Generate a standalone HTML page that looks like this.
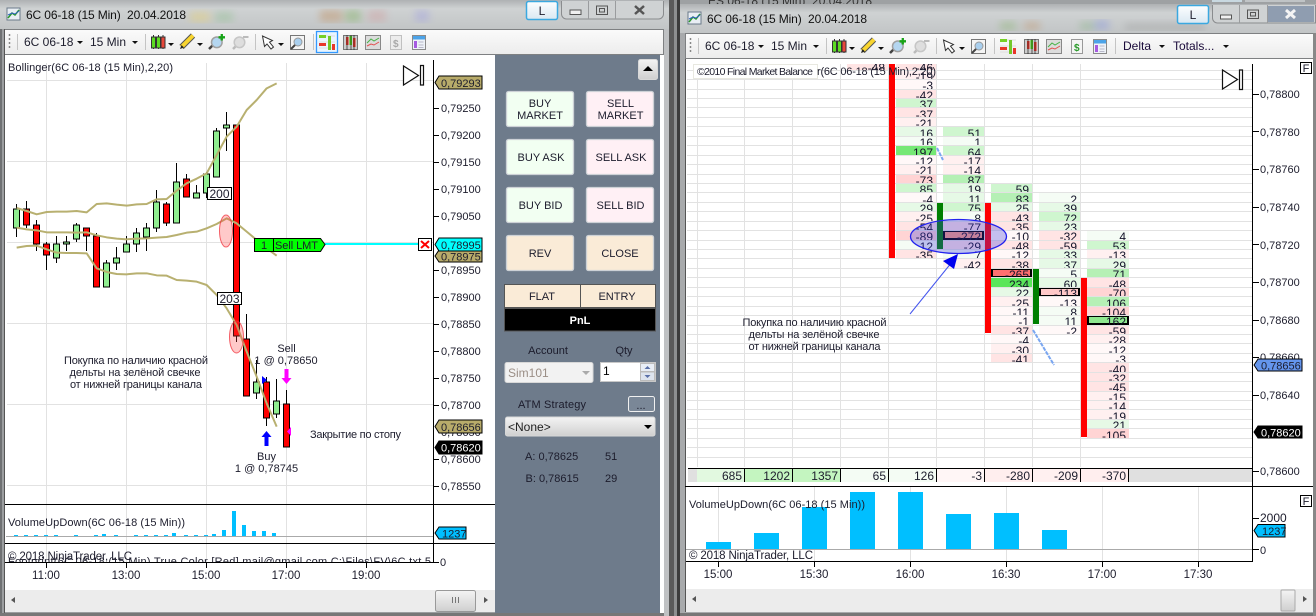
<!DOCTYPE html>
<html><head><meta charset="utf-8">
<style>
html,body{margin:0;padding:0;background:#888}
#w{position:relative;width:1316px;height:616px;overflow:hidden;background:#8f9193}
svg{position:absolute;left:0;top:0}
text{font-family:"Liberation Sans","Noto Sans CJK JP",sans-serif;font-size:11px;fill:#1c1c2c}
.t12{font-size:12px}
.m{text-anchor:middle}
#fp{position:absolute;left:0;top:64px;width:1316px;height:400px;overflow:hidden}
.c{position:absolute}
.c i{display:block;height:9.44px;overflow:hidden;font:normal 12px/14px "Liberation Sans",sans-serif;color:#14142a;text-align:right;padding-right:3px;box-sizing:border-box}
.g1{background:#f5fcf5}.g2{background:#e6f9e6}.g3{background:#cff6cf}.g4{background:#b5f0b5}.g5{background:#75e875}.g6{background:#5ae65a}
.p1{background:#fff8f8}.p2{background:#fff0f0}.p3{background:#ffe4e4}.p4{background:#ffd4d4}
.bx{box-shadow:inset 0 0 0 2px #000}
</style></head><body><div id="w">
<svg width="1316" height="616" viewBox="0 0 1316 616">
<defs>
<linearGradient id="tb" x1="0" y1="0" x2="0" y2="1"><stop offset="0" stop-color="#fbfbfb"/><stop offset="1" stop-color="#ececec"/></linearGradient>
<linearGradient id="ti" x1="0" y1="0" x2="0" y2="1"><stop offset="0" stop-color="#aeb1b3"/><stop offset=".3" stop-color="#cfd2d3"/><stop offset="1" stop-color="#c2c5c6"/></linearGradient>
<linearGradient id="bt" x1="0" y1="0" x2="0" y2="1"><stop offset="0" stop-color="#f4f4f4"/><stop offset="1" stop-color="#cfcfcf"/></linearGradient>
<linearGradient id="lb" x1="0" y1="0" x2="0" y2="1"><stop offset="0" stop-color="#fdfeff"/><stop offset="1" stop-color="#d9e8f2"/></linearGradient>
<filter id="bl"><feGaussianBlur stdDeviation="4"/></filter>
<clipPath id="ov"><rect x="5" y="545" width="428" height="17"/></clipPath>
<g id="icons">
<path d="M153.500 35v14M158.500 35v14M163 35v14" stroke="#333"/>
<path d="M151.500 37h4v11h-4zM156.500 37h4v11h-4z" fill="#5cdc22" stroke="#333"/>
<path d="M161 37h4v11h-4z" fill="#e8473a" stroke="#333"/>
<path d="M168 43h6l-3 3z" fill="#111"/>
<path d="M181.500 47l11.500-11.500" stroke="#555" stroke-width="6"/><path d="M181.500 47l11.500-11.500" stroke="#f9d52f" stroke-width="4"/><path d="M180 49l1.500-4 2.500 2.500z" fill="#222"/>
<path d="M197 43h6l-3 3z" fill="#111"/>
<path d="M209 49l4.500-4.500" stroke="#444" stroke-width="2.500"/><circle cx="216.800" cy="42.300" r="5.300" fill="#b4d6f0" stroke="#a0a0a0" stroke-width="1.500"/><path d="M221.800 34v6.500M218.500 37.300h6.500" stroke="#17a317" stroke-width="2.300"/>
<path d="M233 49l4.500-4.500" stroke="#bbb" stroke-width="2.500"/><circle cx="239.500" cy="42.300" r="5.300" fill="#dedede" stroke="#c6c6c6" stroke-width="1.500"/><path d="M243 37h5.500" stroke="#bbb" stroke-width="2"/>
<path d="M262.500 36l2 10.500 2.500-2.500 4 5 2.500-2-4-4.800 3-1.700z" fill="#fff" stroke="#333"/>
<path d="M278 43h6l-3 3z" fill="#111"/>
<rect x="290.500" y="35.500" width="14" height="14" fill="#f4f4f4" stroke="#777"/><circle cx="298" cy="42" r="4" fill="#a9cfee" stroke="#999"/><path d="M291 49l4-4" stroke="#444" stroke-width="2"/>
<path d="M319 36h16M319 42h16M319 48h16" stroke="#ddd"/><path d="M319 35h7v3h-7z" fill="#76d026"/><path d="M319 43h7v3h-7z" fill="#e8362a"/><path d="M328 36h3v14h-3z" fill="#74c82a"/><path d="M332 44h3v6h-3z" fill="#e8362a"/>
<rect x="343.500" y="35.500" width="14" height="14" fill="#ccc" stroke="#777"/><path d="M346 37h2.500v8H346zM353 38h2.500v9H353z" fill="#e8362a"/><path d="M349.500 36H352v9h-2.500z" fill="#4ed41e"/><path d="M347 35v15M351 35v15M354 35v15" stroke="#222" stroke-width=".7"/>
<rect x="365.500" y="35.500" width="15" height="14" fill="#dcdcdc" stroke="#888"/><path d="M367 43l4-4 3 2 5-3" stroke="#47b247" fill="none"/><path d="M367 46l4-2 3 1 5-3" stroke="#e25050" fill="none"/>
<rect x="412.500" y="35.500" width="13" height="14" fill="#eef2f8" stroke="#8a8a8a"/><rect x="413" y="36" width="12" height="3.500" fill="#4ca3e8"/><rect x="414" y="41" width="3" height="7" fill="#a65ae0"/><path d="M418.500 42h5M418.500 45h5M418.500 47.500h5" stroke="#b8b8c8"/>
</g>
</defs>

<!-- window 1 frame -->
<rect x="0" y="0" width="670" height="616" fill="#9c9ea0"/>
<rect x="0" y="0" width="2" height="616" fill="#6f7173"/>
<rect x="0" y="0" width="670" height="29" fill="url(#ti)"/>
<g filter="url(#bl)" opacity=".45"><rect x="190" y="12" width="20" height="10" fill="#e8d070"/><rect x="215" y="12" width="18" height="10" fill="#90c090"/><rect x="320" y="10" width="22" height="12" fill="#c09060"/><rect x="345" y="10" width="16" height="12" fill="#80b060"/><rect x="368" y="10" width="18" height="12" fill="#d0a0a0"/><rect x="415" y="10" width="14" height="12" fill="#a0a0e0"/></g>
<rect x="7" y="8" width="13" height="12" fill="#e9eef4" stroke="#6a7a8a"/><path d="M8 18l4-5 3 2 4-5" stroke="#2a9a2a" stroke-width="1.500" fill="none"/><path d="M8 15l4-2 3 1 4-3" stroke="#3060c0" fill="none"/>
<text x="26" y="19" class="t12" textLength="160" style="fill:#111">6C 06-18 (15 Min)&#160;&#160;20.04.2018</text>
<rect x="526.500" y="1.500" width="31" height="18" rx="2" fill="url(#lb)" stroke="#3aa8e0" stroke-width="1.500"/><text x="542" y="15" class="t12 m">L</text>
<path d="M561.500 1v13a5 5 0 0 0 5 5h92a5 5 0 0 0 5-5V1" fill="#cfd2d3" stroke="#8a8c8e"/>
<path d="M588.500 1v18M615.500 1v18" stroke="#9a9c9e"/>
<rect x="570" y="10" width="11" height="4.500" fill="#f0f0f0" stroke="#555"/><rect x="596.500" y="6" width="11" height="8.500" fill="none" stroke="#555"/><rect x="599.500" y="8.500" width="5" height="3.500" fill="none" stroke="#555"/>
<path d="M635 6l9 8M644 6l-9 8" stroke="#555" stroke-width="2.500"/>
<!-- left white area -->
<rect x="5" y="55" width="490" height="557" fill="#fff"/>
<rect x="660" y="55" width="4" height="558" fill="#fff"/>
<rect x="4.500" y="29.500" width="659" height="25" fill="url(#tb)" stroke="#7e8082"/>
<rect x="4" y="29" width="1" height="584" fill="#555"/>
<rect x="0" y="613" width="670" height="3" fill="#777"/>
<!-- toolbar L -->
<path d="M9.500 34v2M9.500 38v2M9.500 42v2M9.500 46v2" stroke="#888" stroke-width="1.500"/>
<path d="M17.500 34v16M145.500 34v16M255.500 34v16M313.500 34v16" stroke="#c4c4c4"/>
<text x="24" y="46" class="t12">6C 06-18</text><path d="M77 41h6l-3 3z" fill="#111"/>
<text x="90" y="46" class="t12">15 Min</text><path d="M132 41h6l-3 3z" fill="#111"/>
<rect x="316.500" y="31.500" width="21" height="21" fill="#e9f5ff" stroke="#3399ff" stroke-width="1.300"/>
<use href="#icons"/>
<rect x="390.500" y="35.500" width="11" height="14" fill="#ececec" stroke="#c0c0c0"/><text x="393" y="47" style="font-size:10px;font-weight:bold;fill:#a8a8a8">$</text>

<!-- left chart -->
<g stroke="#e2e2e2" fill="none">
<path d="M46.500 63V562M126.500 63V562M206.500 63V562M286.500 63V562M366.500 63V562"/>
<path d="M7 80.500H433M7 161.500H433M7 242.500H433M7 323.500H433M7 404.500H433M7 485.500H433"/>
</g>
<text x="8" y="71" textLength="165">Bollinger(6C 06-18 (15 Min),2,20)</text>
<path d="M403.500 66v19l15-9.500zM420.500 65.500h3v19.500h-3z" fill="#fff" stroke="#111" stroke-width="1.200"/>
<path d="M16.500 204V237M26.500 201V228M36.500 220V251M46.500 242V270M56.500 236V263M66.500 236V251M76.500 223V242M86.500 228V251M96.500 233V287M106.500 260V287M116.500 247V270M126.500 236V252M136.500 228V252M146.500 223V251M156.500 190V232M166.500 202V226M176.500 163V223M186.500 174V197M196.500 185V198M206.500 172V198M216.500 128V177M226.500 112V151M236.500 125V342M246.500 314V396M256.500 360V399M266.500 377V426M276.500 379V418M286.500 390V447" stroke="#000"/>
<path d="M13.500 209h6v19h-6zM53.500 244h6v14h-6zM63.500 242h6v2h-6zM73.500 225h6v14h-6zM103.500 263h6v24h-6zM113.500 258h6v5h-6zM123.500 244h6v8h-6zM133.500 233h6v11h-6zM143.500 228h6v9h-6zM153.500 202h6v26h-6zM173.500 182h6v41h-6zM193.500 193h6v5h-6zM203.500 174h6v19h-6zM213.500 131h6v46h-6zM223.500 125h6v3h-6zM253.500 382h6v11h-6zM273.500 401h6v13h-6z" fill="#90ee90" stroke="#000"/>
<path d="M23.500 209h6v16h-6zM33.500 225h6v19h-6zM43.500 244h6v11h-6zM83.500 228h6v8h-6zM93.500 236h6v51h-6zM163.500 204h6v19h-6zM183.500 179h6v18h-6zM233.500 125h6v211h-6zM243.500 339h6v57h-6zM263.500 382h6v36h-6zM283.500 404h6v43h-6z" fill="#f00" stroke="#000"/>
<g transform="scale(.33333)" fill="none" stroke="#b8b070" stroke-width="6" stroke-linejoin="round">
<polyline points="50,624 80,633 110,643 140,636 170,635 200,635 230,633 260,637 290,612 320,610 350,614 380,617 410,613 440,612 470,598 500,597 530,572 560,550 590,536 620,520 650,465 680,410 710,380 740,330 770,300 800,265 830,250"/>
<polyline points="50,683 80,688 110,691 140,697 170,697 200,697 230,698 260,697 290,706 320,712 350,716 380,718 410,716 440,715 470,713 500,711 530,705 560,698 590,695 620,685 650,672 680,655 710,670 740,695 770,720 800,745 830,767"/>
<polyline points="50,743 80,738 110,737 140,748 170,758 200,759 230,759 260,760 290,805 320,816 350,822 380,823 410,820 440,820 470,826 500,827 530,840 560,842 590,845 620,855 650,885 680,925 710,975 740,1055 770,1130 800,1210 830,1280"/>
</g>
<ellipse cx="226" cy="231" rx="6.500" ry="16" fill="rgba(255,60,60,.28)" stroke="rgba(240,50,60,.75)"/>
<ellipse cx="236.500" cy="337" rx="7" ry="16" fill="rgba(255,60,60,.28)" stroke="rgba(240,50,60,.75)"/>
<rect x="207.500" y="187.500" width="24" height="12" fill="#fff" stroke="#000"/><text x="219.500" y="198" class="t12 m">200</text>
<rect x="217.500" y="292.500" width="24" height="12" fill="#fff" stroke="#000"/><text x="229.500" y="303" class="t12 m">203</text>
<text x="286.500" y="352" class="m">Sell</text><text x="286" y="364" class="m">1 @ 0,78650</text>
<text x="266.500" y="460" class="m">Buy</text><text x="266.500" y="472" class="m">1 @ 0,78745</text>
<path d="M284.500 369h4v9h3l-5 6-5-6h3z" fill="#f0f"/>
<path d="M264.500 446h4v-9h3l-5-6-5 6h3z" fill="#00f"/>
<path d="M262 376l5 4-5 4z" fill="#00f"/><path d="M291 427v9l-4-4.500z" fill="#f0f"/>
<text x="136" y="364" class="m" textLength="144">Покупка по наличию красной</text>
<text x="135" y="376" class="m" textLength="131">дельты на зелёной свечке</text>
<text x="136" y="388" class="m" textLength="132">от нижней границы канала</text>
<text x="310" y="438" textLength="91">Закрытие по стопу</text>
<!-- Sell LMT -->
<path d="M325 244H418" stroke="#00ffff" stroke-width="2"/>
<path d="M254.500 238.500h66l4.500 6-4.500 7h-66z" fill="#00ff00" stroke="#000"/><path d="M273.500 239v12" stroke="#000"/>
<text x="261" y="249">1</text><text x="275" y="249" textLength="43">Sell LMT</text>
<rect x="418.500" y="238.500" width="13" height="12" fill="#fff" stroke="#000"/><path d="M421 241l8 7M429 241l-8 7" stroke="#f00" stroke-width="2"/>
<!-- panels left -->
<path d="M5 504.500H495M5 543.500H495" stroke="#000"/>
<path d="M233.500 0" />
<path d="M232 511h4v25h-4zM242 525h4v11h-4zM252 531h4v5h-4zM262 531h4v5h-4zM272 533h4v3h-4zM222 530h4v6h-4zM212 534h4v2h-4zM172 533h4v3h-4zM102 534h4v2h-4zM14 535h4v1h-4zM24 535h4v1h-4zM34 535h4v1h-4zM44 535h4v1h-4zM54 535h4v1h-4zM74 535h4v1h-4zM94 535h4v1h-4zM114 535h4v1h-4zM134 535h4v1h-4zM144 535h4v1h-4zM154 535h4v1h-4zM164 535h4v1h-4zM184 535h4v1h-4zM194 535h4v1h-4zM204 535h4v1h-4z" fill="#00bfff"/>
<path d="M6 536.500H433" stroke="#aaa"/>
<path d="M5 562.500H433M433.500 60V562" stroke="#000"/>
<text x="8" y="526" textLength="177">VolumeUpDown(6C 06-18 (15 Min))</text>
<text x="8" y="560" style="font-size:11.500px" textLength="124">© 2018 NinjaTrader, LLC</text>
<g clip-path="url(#ov)"><text x="8" y="565" textLength="423">Footprint(6C 06-18 (15 Min) True Color [Red] mail@gmail.com C:\Files\FV\6C.txt 5</text></g>
<path d="M5 562.500H433" stroke="#000"/>
<path d="M46.500 563v5M126.500 563v5M206.500 563v5M286.500 563v5M366.500 563v5" stroke="#000"/>
<text x="46" y="579" class="m" style="font-size:11.500px">11:00</text><text x="126" y="579" class="m" style="font-size:11.500px">13:00</text><text x="206" y="579" class="m" style="font-size:11.500px">15:00</text><text x="286" y="579" class="m" style="font-size:11.500px">17:00</text><text x="366" y="579" class="m" style="font-size:11.500px">19:00</text>
<path d="M433 108.500h6M433 135.500h6M433 162.500h6M433 189.500h6M433 216.500h6M433 270.500h6M433 297.500h6M433 324.500h6M433 351.500h6M433 378.500h6M433 405.500h6M433 459.500h6M433 486.500h6M433 562.500h6" stroke="#000"/>
<g><text x="441" y="112">0,79250</text><text x="441" y="139">0,79200</text><text x="441" y="166">0,79150</text><text x="441" y="193">0,79100</text><text x="441" y="220">0,79050</text><text x="441" y="274">0,78950</text><text x="441" y="301">0,78900</text><text x="441" y="328">0,78850</text><text x="441" y="355">0,78800</text><text x="441" y="382">0,78750</text><text x="441" y="409">0,78700</text><text x="441" y="436">0,78650</text><text x="441" y="463">0,78600</text><text x="441" y="490">0,78550</text><text x="440" y="566">0</text></g>
<path d="M435 82.500l4-6.500h43v13h-43z" fill="#b8ab6a" stroke="#000"/><text x="441" y="87">0,79293</text>
<path d="M435 256l4-6h43v12h-43z" fill="#b8ab6a" stroke="#000"/><text x="441" y="260.500">0,78975</text>
<path d="M435 244.500l4-6.500h43v13h-43z" fill="#00ffff" stroke="#000"/><text x="441" y="249">0,78995</text>
<path d="M435 426.500l4-6.500h43v13h-43z" fill="#b8ab6a" stroke="#000"/><text x="441" y="431">0,78656</text>
<path d="M435 447.500l4-6.500h43v13h-43z" fill="#000" stroke="#000"/><text x="441" y="451.500" style="fill:#fff">0,78620</text>
<path d="M435 533l4-6h27v12h-27z" fill="#00bfff" stroke="#000"/><text x="442" y="537.500">1237</text>
<!-- scroll L -->
<rect x="5" y="590" width="490" height="22" fill="#ececec"/>
<path d="M15 597v6l-4-3z" fill="#555"/>
<rect x="435.500" y="590.500" width="40" height="21" rx="2" fill="url(#bt)" stroke="#999"/><path d="M452.500 597v6M455.500 597v6M458.500 597v6" stroke="#777"/>
<path d="M484 597v6l4-3z" fill="#555"/>
<!-- panel -->
<rect x="495" y="55" width="165" height="558" fill="#6e7b8b"/>
<rect x="638.500" y="59.500" width="19" height="20" rx="2" fill="url(#bt)" stroke="#d8d8d8"/><path d="M643 71h10l-5-5z" fill="#000"/>
<g stroke="#cdd1d6" stroke-width="1.300">
<rect x="506.500" y="91.500" width="67" height="35" rx="2" fill="#f2fff2"/><rect x="586.500" y="91.500" width="67" height="35" rx="2" fill="#fff0f5"/>
<rect x="506.500" y="139.500" width="67" height="35" rx="2" fill="#f2fff2"/><rect x="586.500" y="139.500" width="67" height="35" rx="2" fill="#fff0f5"/>
<rect x="506.500" y="187.500" width="67" height="35" rx="2" fill="#f2fff2"/><rect x="586.500" y="187.500" width="67" height="35" rx="2" fill="#fff0f5"/>
<rect x="506.500" y="235.500" width="67" height="35" rx="2" fill="#faebd7"/><rect x="586.500" y="235.500" width="67" height="35" rx="2" fill="#faebd7"/>
</g>
<text x="540" y="107" class="m">BUY</text><text x="540" y="119" class="m">MARKET</text><text x="620.500" y="107" class="m">SELL</text><text x="620.500" y="119" class="m">MARKET</text>
<text x="541" y="161" class="m">BUY ASK</text><text x="621" y="161" class="m">SELL ASK</text><text x="540.500" y="209" class="m">BUY BID</text><text x="620.500" y="209" class="m">SELL BID</text><text x="540" y="257" class="m">REV</text><text x="620" y="257" class="m">CLOSE</text>
<rect x="504.500" y="284.500" width="151" height="23" fill="#faebd7" stroke="#555"/><path d="M580.500 285v22" stroke="#555"/>
<text x="542" y="300" class="m">FLAT</text><text x="617" y="300" class="m">ENTRY</text>
<rect x="504.500" y="308.500" width="151" height="22.500" fill="#000" stroke="#555"/><text x="580" y="324" class="m" style="fill:#fff;font-weight:bold">PnL</text>
<text x="548" y="354" class="m">Account</text><text x="624" y="354" class="m">Qty</text>
<rect x="505" y="362.500" width="88" height="20" rx="2" fill="#f2f2f2" stroke="#d8d8d8"/><text x="508" y="377" style="font-size:12px;fill:#9a8e86">Sim101</text><path d="M582 371h8l-4 4z" fill="#aaa"/>
<rect x="600.500" y="362.500" width="55" height="19" fill="#fff" stroke="#c8c8c8"/><text x="603" y="375" class="t12" style="fill:#000">1</text>
<rect x="640.500" y="363.500" width="14" height="8" fill="#e8eef6" stroke="#bbb"/><rect x="640.500" y="372" width="14" height="8.500" fill="#dde4ee" stroke="#bbb"/><path d="M644.500 369h6l-3-3zM644.500 375h6l-3 3z" fill="#5a70a8"/>
<text x="518" y="408" textLength="68">ATM Strategy</text>
<rect x="628.500" y="396.500" width="26" height="15" rx="2" fill="#7a8797" stroke="#f0f0f0"/><text x="641" y="409" class="m">...</text>
<rect x="505.500" y="417" width="149.500" height="19" rx="2" fill="url(#bt)" stroke="#d8d8d8"/><text x="508" y="431" class="t12" style="fill:#222">&lt;None&gt;</text><path d="M644 425h8l-4 4z" fill="#000"/>
<text x="525" y="460">A: 0,78625</text><text x="605" y="460">51</text><text x="525.500" y="482">B: 0,78615</text><text x="605" y="482">29</text>

<!-- gap -->
<rect x="664" y="29" width="5" height="587" fill="#bfc1c3"/>
<rect x="669" y="0" width="5" height="616" fill="#5a5a5a"/>
<rect x="674" y="0" width="3" height="616" fill="#8d8f90"/>
<rect x="677" y="0" width="3" height="616" fill="#3c3c3c"/>

<!-- window 2 -->
<rect x="680" y="0" width="636" height="616" fill="#a8aaac"/>
<rect x="680" y="0" width="636" height="4" fill="#9ea1a3"/>
<text x="708" y="5" class="t12" style="fill:#333">ES 06-18 (15 Min)&#160;&#160;20.04.2018</text>
<rect x="1212" y="0" width="30" height="2" fill="#c8d8e0"/><rect x="1245" y="0" width="60" height="2" fill="#c0c4c6"/>
<rect x="680" y="4" width="636" height="29" fill="url(#ti)"/>
<g filter="url(#bl)" opacity=".4"><rect x="1000" y="22" width="16" height="8" fill="#80b060"/><rect x="1024" y="22" width="16" height="8" fill="#c09060"/><rect x="1080" y="22" width="16" height="8" fill="#80b080"/><rect x="1095" y="20" width="14" height="10" fill="#8090e0"/><rect x="1125" y="24" width="80" height="6" fill="#909090"/></g>
<rect x="688" y="12" width="13" height="12" fill="#e9eef4" stroke="#6a7a8a"/><path d="M689 22l4-5 3 2 4-5" stroke="#2a9a2a" stroke-width="1.500" fill="none"/><path d="M689 19l4-2 3 1 4-3" stroke="#3060c0" fill="none"/>
<text x="707" y="23" class="t12" textLength="160" style="fill:#111">6C 06-18 (15 Min)&#160;&#160;20.04.2018</text>
<rect x="1177.500" y="5.500" width="31" height="18" rx="2" fill="url(#lb)" stroke="#3aa8e0" stroke-width="1.500"/><text x="1193" y="19" class="t12 m">L</text>
<path d="M1212.500 5v13a5 5 0 0 0 5 5h98V5" fill="#cfd2d3" stroke="#8a8c8e"/>
<rect x="1268" y="6" width="46" height="16" fill="#8f9db0"/>
<path d="M1239.500 5v18M1267.500 5v18" stroke="#9a9c9e"/>
<rect x="1220.500" y="15" width="11" height="4" fill="#f0f0f0" stroke="#555"/><rect x="1247.500" y="10" width="11" height="8.500" fill="none" stroke="#555"/><rect x="1250.500" y="12.500" width="5" height="3.500" fill="none" stroke="#555"/>
<path d="M1286 10l9 8M1295 10l-9 8" stroke="#f4f4f4" stroke-width="3"/>
<rect x="685" y="58" width="628" height="554" fill="#fff"/>
<rect x="685.500" y="33.500" width="628" height="25" fill="url(#tb)" stroke="#7e8082"/>
<rect x="685" y="59" width="1" height="553" fill="#555"/>
<rect x="680" y="613" width="636" height="3" fill="#777"/>
<rect x="1313" y="33" width="3" height="583" fill="#888"/>
<path d="M690.500 38v2M690.500 42v2M690.500 46v2M690.500 50v2" stroke="#888" stroke-width="1.500"/>
<path d="M698.500 38v16M826.500 38v16M936.500 38v16M994.500 38v16M1115.500 38v16" stroke="#c4c4c4"/>
<text x="705" y="50" class="t12">6C 06-18</text><path d="M758 45h6l-3 3z" fill="#111"/>
<text x="771" y="50" class="t12">15 Min</text><path d="M813 45h6l-3 3z" fill="#111"/>
<use href="#icons" x="681" y="4"/>
<rect x="1071.500" y="39.500" width="11" height="14" fill="#f4f4f4" stroke="#999"/><text x="1074" y="51" style="font-size:10px;font-weight:bold;fill:#2a9a2a">$</text>
<text x="1123" y="50" class="t12" style="fill:#1a0a3a">Delta</text><path d="M1159 45h6l-3 3z" fill="#111"/>
<text x="1173" y="50" class="t12" style="fill:#1a0a3a">Totals...</text><path d="M1223 45h6l-3 3z" fill="#111"/>
</svg>

<div id="fp">
<div class="c" style="left:847px;top:-3.44px;width:41px"><i class="p3">-48</i></div>
<div class="c" style="left:896px;top:-3.44px;width:40px"><i class="p3">-46</i><i class="p2">-19</i><i class="p1">-3</i><i class="p3">-42</i><i class="g3">37</i><i class="p3">-37</i><i class="p2">-21</i><i class="g2">16</i><i class="g1">16</i><i class="g5">197</i><i class="p1">-12</i><i class="p2">-21</i><i class="p4">-73</i><i class="g3">85</i><i class="p1">-4</i><i class="g2">29</i><i class="p2">-25</i><i class="p3">-54</i><i class="p4">-89</i><i class="g1">12</i><i class="p3">-35</i></div>
<div class="c" style="left:943px;top:62.64px;width:41px"><i class="g3">51</i><i class="g1">1</i><i class="g3">64</i><i class="p2">-17</i><i class="p2">-14</i><i class="g4">87</i><i class="g2">19</i><i class="g2">11</i><i class="g3">75</i><i class="g1">8</i><i class="p3">-77</i><i class="bx" style="background:#ffa080">-272</i><i class="p3">-29</i><i class="g1">7</i><i class="p2">-42</i></div>
<div class="c" style="left:991px;top:119.28px;width:41px"><i class="g3">59</i><i class="g4">83</i><i class="g2">25</i><i class="p3">-43</i><i class="p3">-35</i><i class="p1">-10</i><i class="p3">-48</i><i class="p1">-12</i><i class="p3">-38</i><i class="bx" style="background:#ff7070">-265</i><i class="g6">234</i><i class="g2">22</i><i class="p2">-25</i><i class="p1">-11</i><i class="p1">-1</i><i class="p3">-37</i><i class="p1">-4</i><i class="p2">-30</i><i class="p3">-41</i></div>
<div class="c" style="left:1039px;top:128.72px;width:41px"><i class="g1">2</i><i class="g2">39</i><i class="g3">72</i><i class="g2">23</i><i class="p3">-32</i><i class="p3">-59</i><i class="g2">33</i><i class="g2">37</i><i class="g1">5</i><i class="g2">60</i><i class="bx" style="background:#ffc8c8">-113</i><i class="p1">-13</i><i class="g1">8</i><i class="g1">11</i><i class="p1">-2</i></div>
<div class="c" style="left:1087px;top:166.48px;width:42px"><i class="g1">4</i><i class="g3">53</i><i class="p2">-13</i><i class="g2">29</i><i class="g4">71</i><i class="p3">-48</i><i class="p4">-70</i><i class="g4">106</i><i class="p4">-104</i><i class="bx" style="background:#8fe88f">162</i><i class="p3">-59</i><i class="p2">-28</i><i class="p1">-12</i><i class="p1">-3</i><i class="p3">-40</i><i class="p3">-32</i><i class="p3">-45</i><i class="p2">-15</i><i class="p2">-14</i><i class="p2">-19</i><i class="g2">21</i><i class="p4">-105</i></div>
</div>

<svg width="1316" height="616" viewBox="0 0 1316 616">
<!-- right grid -->
<g stroke="#e2e2e2" fill="none">
<path d="M697.500 64V467M744.500 64V467M792.500 64V467M840.500 64V467M888.500 64V467M936.500 64V467M984.500 64V467M1032.500 64V467M1080.500 64V467"/>
<path d="M687 70.500H1252M687 79.500H1252M687 89.500H1252M687 98.500H1252M687 107.500H1252M687 117.500H1252M687 126.500H1252M687 136.500H1252M687 145.500H1252M687 155.500H1252M687 164.500H1252M687 174.500H1252M687 183.500H1252M687 192.500H1252M687 202.500H1252M687 211.500H1252M687 221.500H1252M687 230.500H1252M687 240.500H1252M687 249.500H1252M687 258.500H1252M687 268.500H1252M687 277.500H1252M687 287.500H1252M687 296.500H1252M687 306.500H1252M687 315.500H1252M687 325.500H1252M687 334.500H1252M687 343.500H1252M687 353.500H1252M687 362.500H1252M687 372.500H1252M687 381.500H1252M687 391.500H1252M687 400.500H1252M687 409.500H1252M687 419.500H1252M687 428.500H1252M687 438.500H1252M687 447.500H1252M687 457.500H1252"/>
</g>
<rect x="889" y="64" width="6" height="194" fill="#f00"/>
<rect x="937" y="203" width="6" height="46" fill="#008000"/>
<rect x="985" y="203" width="6" height="130" fill="#f00"/>
<rect x="1033" y="269" width="6" height="55" fill="#008000"/>
<rect x="1081" y="278" width="6" height="159" fill="#f00"/>
<rect x="693.500" y="64.500" width="124" height="14" fill="#fff" stroke="#e8e8e0"/>
<text x="697" y="75" style="font-size:10.500px" textLength="116">©2010 Final Market Balance</text>
<text x="817" y="75" textLength="119">r(6C 06-18 (15 Min),2,20)</text>
<path d="M1222.500 70v19l15-9.500zM1239.500 70h3v19.500h-3z" fill="#fff" stroke="#111" stroke-width="1.200"/>
<rect x="1300.500" y="62.500" width="11" height="11" fill="#fff" stroke="#000"/><text x="1306" y="72" class="m">F</text>
<ellipse cx="958.500" cy="236.500" rx="48" ry="17" fill="rgba(60,60,220,.3)" stroke="#2222ee" stroke-width="1.300"/>
<path d="M910 314L952 262" stroke="#4455ee"/>
<path d="M943 261L958 254 954 269z" fill="#0000ee"/>
<path d="M1033 330L1054 365M937 148L943 160" stroke="#7aa6f0" stroke-width="2" stroke-dasharray="4 1"/>
<text x="814.500" y="326" class="m" textLength="144">Покупка по наличию красной</text>
<text x="814" y="338" class="m" textLength="131">дельты на зелёной свечке</text>
<text x="814.500" y="350" class="m" textLength="132">от нижней границы канала</text>
<!-- totals -->
<rect x="688" y="469" width="9" height="13" fill="#e0e0e0"/>
<rect x="697" y="469" width="47" height="13" fill="#e2f9e0"/><rect x="745" y="469" width="47" height="13" fill="#c4f5c0"/><rect x="793" y="469" width="47" height="13" fill="#c4f5c0"/><rect x="841" y="469" width="47" height="13" fill="#f4fcf4"/><rect x="889" y="469" width="47" height="13" fill="#f4fcf4"/><rect x="937" y="469" width="47" height="13" fill="#fff6f6"/><rect x="985" y="469" width="47" height="13" fill="#ffeeee"/><rect x="1033" y="469" width="47" height="13" fill="#fff0f0"/><rect x="1081" y="469" width="47" height="13" fill="#ffeeee"/>
<rect x="1129" y="469" width="123" height="13" fill="#e0e0e0"/>
<path d="M688 468.500H1252M744.500 468v14M792.500 468v14M840.500 468v14M888.500 468v14M936.500 468v14M984.500 468v14M1032.500 468v14M1080.500 468v14M1128.500 468v14" stroke="#000"/>
<g class="t12" text-anchor="end">
<text x="742" y="480" class="t12">685</text><text x="790" y="480" class="t12">1202</text><text x="838" y="480" class="t12">1357</text><text x="886" y="480" class="t12">65</text><text x="934" y="480" class="t12">126</text><text x="982" y="480" class="t12">-3</text><text x="1030" y="480" class="t12">-280</text><text x="1078" y="480" class="t12">-209</text><text x="1126" y="480" class="t12">-370</text>
</g>
<path d="M685 486.500H1313M686 561.500H1253M1252.500 64V562" stroke="#000"/>
<!-- lower -->
<path d="M718.500 487V561M814.500 487V561M910.500 487V561M1006.500 487V561M1102.500 487V561M1198.500 487V561" stroke="#e2e2e2"/>
<path d="M706 542h25v7h-25zM754 533h25v16h-25zM802 507h25v42h-25zM850 492h25v57h-25zM898 492h25v57h-25zM946 514h25v35h-25zM994 513h25v36h-25zM1042 530h25v19h-25z" fill="#00bfff"/>
<path d="M686 549.500H1252" stroke="#aaa"/>
<text x="689" y="508" textLength="176">VolumeUpDown(6C 06-18 (15 Min))</text>
<text x="689" y="559" style="font-size:11.500px" textLength="124">© 2018 NinjaTrader, LLC</text>
<path d="M718.500 562v5M814.500 562v5M910.500 562v5M1006.500 562v5M1102.500 562v5M1198.500 562v5" stroke="#000"/>
<text x="718" y="578" class="m" style="font-size:11.500px">15:00</text><text x="814" y="578" class="m" style="font-size:11.500px">15:30</text><text x="910" y="578" class="m" style="font-size:11.500px">16:00</text><text x="1006" y="578" class="m" style="font-size:11.500px">16:30</text><text x="1102" y="578" class="m" style="font-size:11.500px">17:00</text><text x="1198" y="578" class="m" style="font-size:11.500px">17:30</text>
<rect x="1300.500" y="495.500" width="11" height="11" fill="#fff" stroke="#000"/><text x="1306" y="505" class="m">F</text>
<path d="M1253 94.500h6M1253 131.500h6M1253 169.500h6M1253 207.500h6M1253 244.500h6M1253 282.500h6M1253 320.500h6M1253 357.500h6M1253 395.500h6M1253 471.500h6M1253 518.500h6M1253 549.500h6" stroke="#000"/>
<text x="1260" y="98">0,78800</text><text x="1260" y="136">0,78780</text><text x="1260" y="173">0,78760</text><text x="1260" y="211">0,78740</text><text x="1260" y="249">0,78720</text><text x="1260" y="286">0,78700</text><text x="1260" y="324">0,78680</text><text x="1260" y="361">0,78660</text><text x="1260" y="399">0,78640</text><text x="1260" y="475">0,78600</text>
<text x="1260" y="522" class="t12">2000</text><text x="1260" y="554">0</text>
<path d="M1254 365l4-6h44v12h-44z" fill="#6495ed" stroke="#000"/><text x="1261" y="369.500">0,78656</text>
<path d="M1254 432l4-6h44v12h-44z" fill="#000" stroke="#000"/><text x="1261" y="436.500" style="fill:#fff">0,78620</text>
<path d="M1254 530.500l4-6h27v12.500h-27z" fill="#00bfff" stroke="#000"/><text x="1262" y="535">1237</text>
<!-- scroll R -->
<rect x="686" y="589" width="627" height="23" fill="#ececec"/>
<path d="M696 596v6l-4-3z" fill="#555"/>
<rect x="1281" y="590" width="14" height="21" rx="1" fill="url(#bt)" stroke="#aaa"/>
<path d="M1303 596v6l4-3z" fill="#555"/>
</svg>
</div></body></html>
